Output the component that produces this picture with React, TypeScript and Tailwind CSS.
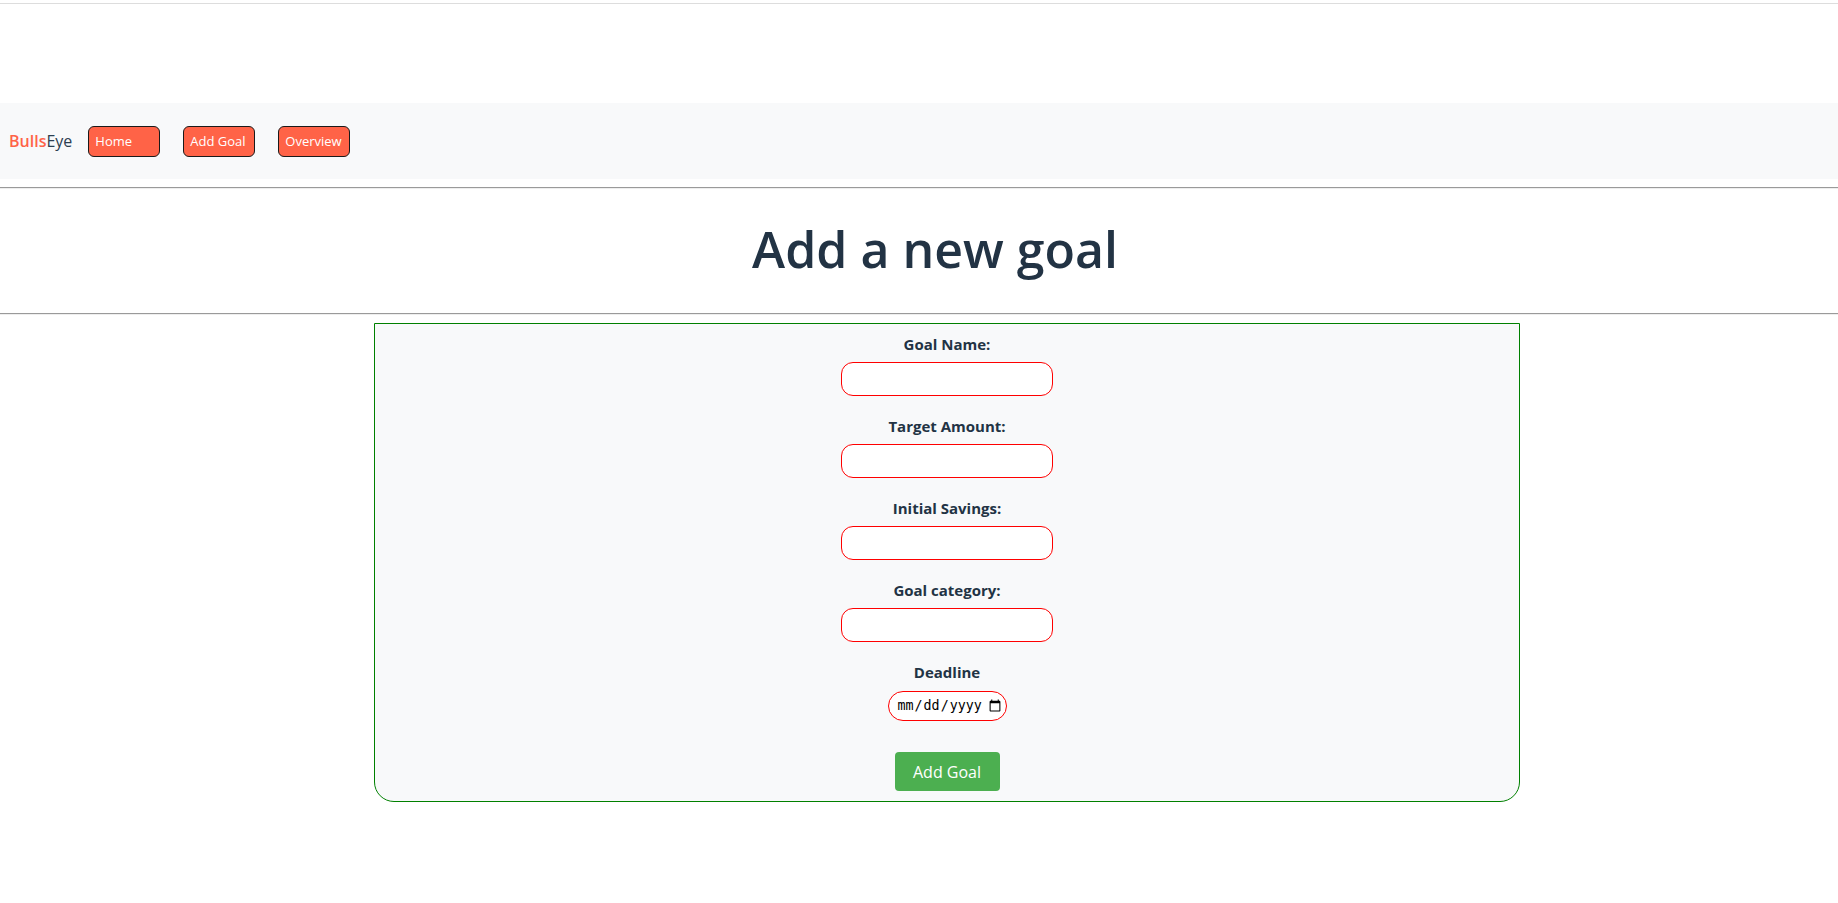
import React from "react";

const fields = ["Goal Name:", "Target Amount:", "Initial Savings:", "Goal category:"];

export default function App() {
  return (
    <div
      className="min-h-screen bg-white text-[#223344]"
      style={{ fontFamily: '"Open Sans", "Noto Sans", sans-serif' }}
    >
      <div className="pt-[3px]">
        <div className="border-t border-[#dddddd]" />
      </div>
      <div className="h-[99px]" />
      <nav className="h-[76px] bg-[#f8f9fa] flex items-center pl-[9px]">
        <a className="text-[16px] leading-none mr-[16px]">
          <span className="text-[#ff6347] font-semibold">Bulls</span>
          <span className="text-[#2c3e50]">Eye</span>
        </a>
        <div className="flex items-center gap-[23px]">
          {["Home", "Add Goal", "Overview"].map((t) => (
            <button
              key={t}
              className="w-[72px] h-[31px] bg-[#ff6347] border border-[#1a1a1a] rounded-[6px] text-white text-[13px] text-left pl-[6px] leading-none"
            >
              {t}
            </button>
          ))}
        </div>
      </nav>
      <div className="mt-[8px] border-t border-b border-t-[#9a9a9a] border-b-[#eeeeee]" />
      <div className="h-[124px] flex items-center justify-center pl-[32px] pb-[4px]">
        <h1 className="text-[50px] font-semibold text-[#223344] leading-tight">Add a new goal</h1>
      </div>
      <div className="border-t border-b border-t-[#9a9a9a] border-b-[#eeeeee]" />
      <form className="mt-[8px] ml-[374px] w-[1146px] border border-[#008000] rounded-b-[20px] bg-[#f8f9fa] pt-[8px] pb-[10px] flex flex-col items-center">
        {fields.map((f) => (
          <div key={f} className="flex flex-col items-center mb-[18px]">
            <label className="text-[15px] font-bold leading-[24px] text-[#223344]">{f}</label>
            <input
              type="text"
              className="mt-[6px] w-[212px] h-[34px] border border-[#ff0000] rounded-[12px] bg-white outline-none"
            />
          </div>
        ))}
        <div className="flex flex-col items-center">
          <label className="text-[15px] font-bold leading-[24px] text-[#223344]">Deadline</label>
          <input
            type="date"
            className="mt-[7px] w-[119px] h-[30px] border border-[#ff0000] rounded-[15px] bg-white pl-[8px] pr-[2px] text-[13.33px] text-black outline-none"
            style={{ fontFamily: '"DejaVu Sans Mono", monospace' }}
          />
        </div>
        <button
          type="button"
          className="mt-[31px] w-[105px] h-[39px] bg-[#4caf50] rounded-[4px] text-white text-[16px]"
        >
          Add Goal
        </button>
      </form>
    </div>
  );
}
